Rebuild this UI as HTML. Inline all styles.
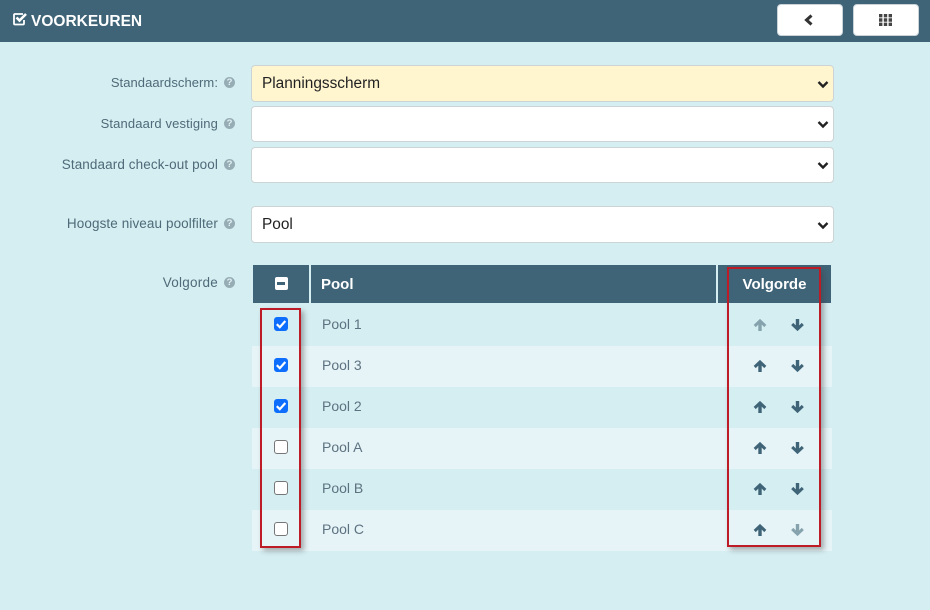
<!DOCTYPE html>
<html><head><meta charset="utf-8"><style>
html,body{margin:0;padding:0}
body{width:930px;height:610px;position:relative;overflow:hidden;background:#d5eef2;font-family:"Liberation Sans",sans-serif;color:#4a6472}
.a{position:absolute}
.bar{left:0;top:0;width:930px;height:42px;background:#3f6478}
.title{left:31px;top:13px;font-size:15.5px;line-height:18px;font-weight:bold;color:#fff;white-space:nowrap}
.btn{width:64px;height:30px;top:4px;background:#fff;border:1px solid #c9d3d8;border-radius:4px}
.lb{right:712px;font-size:13px;line-height:18px;color:#4f6a78;white-space:nowrap;text-align:right}
.q{left:224px;width:11px;height:11px;border-radius:50%;background:#97adb5;color:#e2f2f5;font-size:9.5px;line-height:11px;text-align:center;font-weight:bold}
.sel{left:251px;width:581px;background:#fff;border:1px solid #cdd4d6;border-radius:4px;font-size:15.400px;color:#222;box-sizing:content-box}
.sel span{position:absolute;left:10px;top:50%;transform:translateY(-50%)}
.sel svg{position:absolute;right:4px;top:50%;margin-top:-5px}
.h{top:265px;height:38px;background:#3f6478;color:#fff;font-weight:bold;font-size:15px;line-height:40px}
.row{left:252px;width:580px;height:41px}
.alt{background:#e6f4f7}
.p{left:322px;font-size:14px;line-height:18px;color:#5d7280}
.cb{left:274px;width:12px;height:12px;border:1px solid #767676;border-radius:3px;background:#fff}
.on{background:#0d6efd;border-color:#0d6efd}
.cb svg{position:absolute;left:0;top:0}
.red{border:2.500px solid #bd1c26;box-shadow:3px 3px 5px rgba(60,60,60,.4);box-sizing:border-box}
</style></head><body>
<div class="a bar"></div>
<svg class="a" style="left:13px;top:12px" width="15" height="14" viewBox="0 0 15 14"><path d="M11 8V11.500a1 1 0 0 1-1 1H2a1 1 0 0 1-1-1V3a1 1 0 0 1 1-1h8" fill="none" stroke="#fff" stroke-width="1.800"/><path d="M3.500 5.500l3 3L13 2" fill="none" stroke="#fff" stroke-width="2.600"/></svg>
<div class="a title">VOORKEUREN</div>
<div class="a btn" style="left:777px"><svg class="a" style="left:26px;top:9px" width="12" height="12" viewBox="0 0 12 12"><path d="M7.500 1.500L2.500 6l5 4.500" fill="none" stroke="#333" stroke-width="3"/></svg></div>
<div class="a btn" style="left:853px"><svg class="a" style="left:25px;top:9px" width="13" height="12" viewBox="0 0 13 12" fill="#444"><path d="M0 0h3.400v3.400H0zM4.800 0h3.400v3.400H4.800zM9.600 0H13v3.400H9.600zM0 4.300h3.400v3.400H0zM4.800 4.300h3.400v3.400H4.800zM9.600 4.300H13v3.400H9.600zM0 8.600h3.400V12H0zM4.800 8.600h3.400V12H4.800zM9.600 8.600H13V12H9.600z"/></svg></div>

<div class="a lb" style="top:74px;letter-spacing:.06px">Standaardscherm:</div><div class="a q" style="top:77px">?</div>
<div class="a lb" style="top:115px;letter-spacing:.13px">Standaard vestiging</div><div class="a q" style="top:118px">?</div>
<div class="a lb" style="top:156px;font-size:13.5px;letter-spacing:.1px">Standaard check-out pool</div><div class="a q" style="top:159px">?</div>
<div class="a lb" style="top:215px;font-size:13.5px;letter-spacing:.1px">Hoogste niveau poolfilter</div><div class="a q" style="top:218px">?</div>
<div class="a lb" style="top:274px;font-size:13.5px;letter-spacing:.25px">Volgorde</div><div class="a q" style="top:277px">?</div>

<div class="a sel" style="top:65px;height:35px;background:#fff6cf"><span>Planningsscherm</span><svg width="12" height="10" viewBox="0 0 12 10"><path d="M1.500 3L6 7.500 10.500 3" fill="none" stroke="#222" stroke-width="2.400"/></svg></div>
<div class="a sel" style="top:106px;height:34px"><svg width="12" height="10" viewBox="0 0 12 10"><path d="M1.500 3L6 7.500 10.500 3" fill="none" stroke="#222" stroke-width="2.400"/></svg></div>
<div class="a sel" style="top:147px;height:34px"><svg width="12" height="10" viewBox="0 0 12 10"><path d="M1.500 3L6 7.500 10.500 3" fill="none" stroke="#222" stroke-width="2.400"/></svg></div>
<div class="a sel" style="top:206px;height:35px"><span>Pool</span><svg width="12" height="10" viewBox="0 0 12 10"><path d="M1.500 3L6 7.500 10.500 3" fill="none" stroke="#222" stroke-width="2.400"/></svg></div>

<div class="a h" style="left:253px;width:56px"></div>
<div class="a" style="left:274.500px;top:277px;width:13px;height:13px;background:#fff;border-radius:2px"><div class="a" style="left:2.500px;top:5px;width:8px;height:2.500px;background:#3f6478"></div></div>
<div class="a h" style="left:311px;width:395px;padding-left:10px">Pool</div>
<div class="a h" style="left:718px;width:113px;text-align:center">Volgorde</div>

<div class="a row alt" style="top:346px"></div>
<div class="a row alt" style="top:428px"></div>
<div class="a row alt" style="top:510px"></div>

<div class="a p" style="top:315px">Pool 1</div>
<div class="a p" style="top:356px">Pool 3</div>
<div class="a p" style="top:397px">Pool 2</div>
<div class="a p" style="top:438px">Pool A</div>
<div class="a p" style="top:479px">Pool B</div>
<div class="a p" style="top:520px">Pool C</div>

<div class="a cb on" style="top:317px"><svg width="12" height="12" viewBox="0 0 12 12"><path d="M1.800 6.200l3 3L10.300 3" fill="none" stroke="#fff" stroke-width="2.200"/></svg></div>
<div class="a cb on" style="top:358px"><svg width="12" height="12" viewBox="0 0 12 12"><path d="M1.800 6.200l3 3L10.300 3" fill="none" stroke="#fff" stroke-width="2.200"/></svg></div>
<div class="a cb on" style="top:399px"><svg width="12" height="12" viewBox="0 0 12 12"><path d="M1.800 6.200l3 3L10.300 3" fill="none" stroke="#fff" stroke-width="2.200"/></svg></div>
<div class="a cb" style="top:440px"></div>
<div class="a cb" style="top:481px"></div>
<div class="a cb" style="top:522px"></div>

<svg class="a" style="left:0;top:0" width="930" height="610">
<defs>
<g id="u" fill="none"><path d="M1.200 7L6.500 1.900 11.800 7" stroke-width="3"/><path d="M6.500 3V12" stroke-width="3.400"/></g>
<g id="d" fill="none"><path d="M1.200 5L6.500 10.100 11.800 5" stroke-width="3"/><path d="M6.500 0V9" stroke-width="3.400"/></g>
</defs>
<use href="#u" x="753.500" y="319" stroke="#86a3ad"/><use href="#d" x="791" y="319" stroke="#3f6478"/>
<use href="#u" x="753.500" y="360" stroke="#3f6478"/><use href="#d" x="791" y="360" stroke="#3f6478"/>
<use href="#u" x="753.500" y="401" stroke="#3f6478"/><use href="#d" x="791" y="401" stroke="#3f6478"/>
<use href="#u" x="753.500" y="442" stroke="#3f6478"/><use href="#d" x="791" y="442" stroke="#3f6478"/>
<use href="#u" x="753.500" y="483" stroke="#3f6478"/><use href="#d" x="791" y="483" stroke="#3f6478"/>
<use href="#u" x="753.500" y="524" stroke="#3f6478"/><use href="#d" x="791" y="524" stroke="#86a3ad"/>
</svg>

<div class="a red" style="left:260px;top:308px;width:41px;height:240px"></div>
<div class="a red" style="left:727px;top:267px;width:94px;height:280px"></div>
</body></html>
